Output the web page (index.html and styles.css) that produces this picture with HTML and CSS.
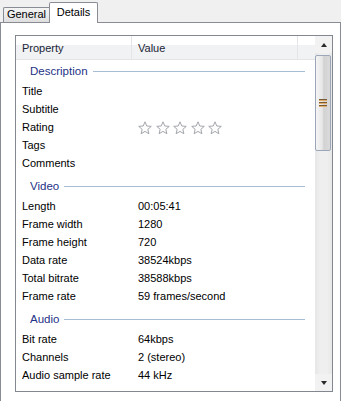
FILE: index.html
```html
<!DOCTYPE html>
<html>
<head>
<meta charset="utf-8">
<link rel="stylesheet" href="styles.css">
</head>
<body>
<div class="tabs">
  <div class="tab">General</div>
  <div class="tab active">Details</div>
</div>
<div class="panel">
  <div class="list">
    <div class="list-main">
      <div class="header">
        <div class="hcol c1">Property</div>
        <div class="hcol c2">Value</div>
        <div class="hcol c3"></div>
      </div>
      <div class="body">
        <div class="group first"><span class="gname">Description</span><span class="gline"></span></div>
        <div class="row"><span class="k">Title</span><span class="v"></span></div>
        <div class="row"><span class="k">Subtitle</span><span class="v"></span></div>
        <div class="row"><span class="k">Rating</span><span class="v stars">
          <svg class="star" viewBox="0 0 14 14"><path d="M7 0.8 L8.76 4.97 L13.28 5.36 L9.85 8.33 L10.88 12.74 L7 10.4 L3.12 12.74 L4.15 8.33 L0.72 5.36 L5.24 4.97 Z"/></svg>
          <svg class="star" viewBox="0 0 14 14"><path d="M7 0.8 L8.76 4.97 L13.28 5.36 L9.85 8.33 L10.88 12.74 L7 10.4 L3.12 12.74 L4.15 8.33 L0.72 5.36 L5.24 4.97 Z"/></svg>
          <svg class="star" viewBox="0 0 14 14"><path d="M7 0.8 L8.76 4.97 L13.28 5.36 L9.85 8.33 L10.88 12.74 L7 10.4 L3.12 12.74 L4.15 8.33 L0.72 5.36 L5.24 4.97 Z"/></svg>
          <svg class="star" viewBox="0 0 14 14"><path d="M7 0.8 L8.76 4.97 L13.28 5.36 L9.85 8.33 L10.88 12.74 L7 10.4 L3.12 12.74 L4.15 8.33 L0.72 5.36 L5.24 4.97 Z"/></svg>
          <svg class="star" viewBox="0 0 14 14"><path d="M7 0.8 L8.76 4.97 L13.28 5.36 L9.85 8.33 L10.88 12.74 L7 10.4 L3.12 12.74 L4.15 8.33 L0.72 5.36 L5.24 4.97 Z"/></svg>
        </span></div>
        <div class="row"><span class="k">Tags</span><span class="v"></span></div>
        <div class="row"><span class="k">Comments</span><span class="v"></span></div>
        <div class="group"><span class="gname">Video</span><span class="gline"></span></div>
        <div class="row"><span class="k">Length</span><span class="v">00:05:41</span></div>
        <div class="row"><span class="k">Frame width</span><span class="v">1280</span></div>
        <div class="row"><span class="k">Frame height</span><span class="v">720</span></div>
        <div class="row"><span class="k">Data rate</span><span class="v">38524kbps</span></div>
        <div class="row"><span class="k">Total bitrate</span><span class="v">38588kbps</span></div>
        <div class="row"><span class="k">Frame rate</span><span class="v">59 frames/second</span></div>
        <div class="group"><span class="gname">Audio</span><span class="gline"></span></div>
        <div class="row"><span class="k">Bit rate</span><span class="v">64kbps</span></div>
        <div class="row"><span class="k">Channels</span><span class="v">2 (stereo)</span></div>
        <div class="row"><span class="k">Audio sample rate</span><span class="v">44 kHz</span></div>
        <div class="group"><span class="gname">Media</span><span class="gline"></span></div>
      </div>
    </div>
    <div class="scrollbar">
      <div class="sbtn"><span class="arrow up"></span></div>
      <div class="track">
        <div class="thumb"><span class="grip"></span><span class="grip"></span><span class="grip"></span></div>
      </div>
      <div class="sbtn"><span class="arrow down"></span></div>
    </div>
  </div>
</div>
</body>
</html>
```

FILE: styles.css
```css
html, body {
  margin: 0;
  padding: 0;
  height: 100%;
}
body {
  width: 341px;
  height: 401px;
  background: #f0f0f0;
  font-family: "Liberation Sans", Arial, sans-serif;
  font-size: 11px;
  color: #000;
  display: flex;
  flex-direction: column;
  overflow: hidden;
}
.tabs {
  height: 22px;
  display: flex;
  align-items: flex-end;
  padding-left: 3px;
  flex: none;
}
.tab {
  box-sizing: border-box;
  height: 15px;
  width: 46px;
  border: 1px solid #898c95;
  border-bottom: none;
  border-right: none;
  background: linear-gradient(#f4f4f4, #ebebeb 50%, #dedede);
  text-align: center;
  line-height: 13px;
  border-radius: 2px 0 0 0;
}
.tab.active {
  position: relative;
  z-index: 1;
  height: 21px;
  width: 49px;
  margin-bottom: -1px;
  border-right: 1px solid #898c95;
  background: #fff;
  padding-top: 2px;
  line-height: 15px;
  border-radius: 2px 2px 0 0;
}
.panel {
  flex: 1;
  box-sizing: border-box;
  border: 1px solid #898c95;
  border-bottom: none;
  background: #fff;
  padding: 12px 7px 0 14px;
}
.list {
  box-sizing: border-box;
  width: 318px;
  height: 357px;
  border: 1px solid #828790;
  display: flex;
  background: #fff;
}
.list-main {
  flex: 1;
  display: flex;
  flex-direction: column;
  overflow: hidden;
}
.header {
  flex: none;
  height: 23px;
  border-bottom: 1px solid #e3e4e6;
  display: flex;
  background: linear-gradient(#ffffff 0, #ffffff 40%, #f1f2f4 40%, #f1f2f4 100%);
  color: #1a2536;
  line-height: 24px;
}
.hcol {
  box-sizing: border-box;
  padding-left: 6px;
  border-right: 1px solid #e3e5e8;
}
.c1 { width: 116px; }
.c2 { width: 166px; }
.c3 { flex: 1; border-right: none; }
.body {
  flex: 1;
  overflow: hidden;
}
.group {
  display: flex;
  align-items: center;
  height: 22px;
  line-height: 22px;
  margin-top: 3px;
  color: #1e3287;
  font-size: 11.5px;
}
.group.first {
  margin-top: 0;
}
.gname {
  padding-left: 14px;
}
.gline {
  flex: 1;
  height: 1px;
  background: #a9bcd5;
  margin: 0 10px 0 5px;
}
.row {
  display: flex;
  height: 18px;
  line-height: 18px;
  white-space: nowrap;
}
.k {
  box-sizing: border-box;
  width: 116px;
  padding-left: 6px;
}
.v {
  padding-left: 6px;
}
.stars {
  display: flex;
  align-items: center;
  gap: 3.5px;
  padding-left: 6px;
  padding-top: 1px;
}
.star {
  width: 14px;
  height: 14px;
  display: block;
}
.star path {
  fill: #fdfdfd;
  stroke: #a3a6ab;
  stroke-width: 1;
  stroke-linejoin: round;
}
.scrollbar {
  width: 17px;
  flex: none;
  display: flex;
  flex-direction: column;
  background: linear-gradient(to right, #e6e6e6, #efefef 30%, #efefef 70%, #e8e8e8);
}
.sbtn {
  height: 17px;
  flex: none;
  display: flex;
  align-items: center;
  justify-content: center;
  background: #f2f2f2;
}
.arrow {
  width: 0;
  height: 0;
  border-left: 3.5px solid transparent;
  border-right: 3.5px solid transparent;
}
.arrow.up {
  border-bottom: 4px solid #2a2a2a;
}
.arrow.down {
  border-top: 4px solid #2a2a2a;
}
.track {
  flex: 1;
  padding-top: 2px;
}
.thumb {
  box-sizing: border-box;
  height: 96px;
  width: 16px;
  border: 1px solid #9ba6b8;
  border-radius: 2px;
  background: linear-gradient(to right, #f5f5f5, #e6e6e6 45%, #d2d2d2 55%, #dadada);
  display: flex;
  flex-direction: column;
  align-items: center;
  justify-content: center;
  gap: 1px;
}
.grip {
  width: 8px;
  height: 1px;
  background: #7a5a34;
  border-bottom: 1px solid #e0ad6b;
}
```
